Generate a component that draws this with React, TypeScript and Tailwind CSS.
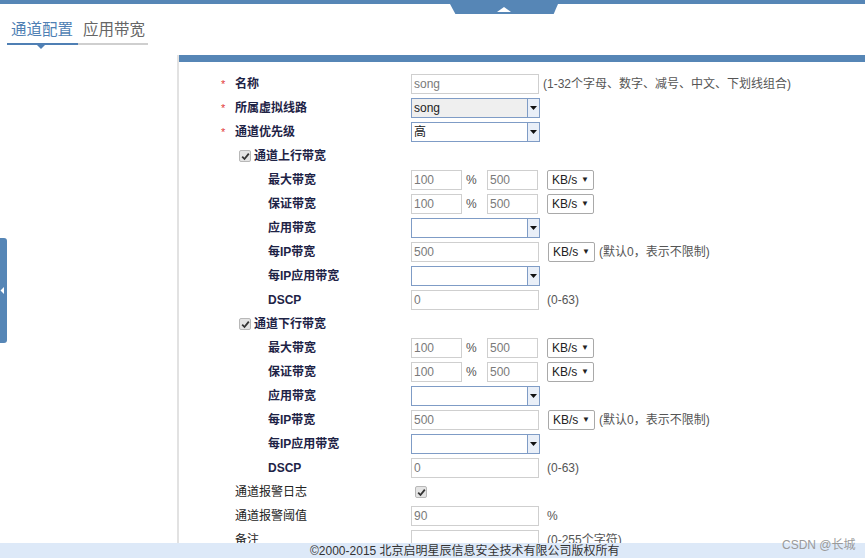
import type { ReactNode } from "react";

const FONT = '"Liberation Sans", "Noto Sans CJK SC", sans-serif';

type Indent = "star" | "plain" | "check" | "sub";

const INDENT_CLASSES: Record<Indent, string> = {
  star: "pl-[42px]",
  plain: "pl-[56px]",
  check: "pl-[60px]",
  sub: "pl-[89px]",
};

function CheckMark() {
  return (
    <span className="flex h-[12px] w-[12px] items-center justify-center rounded-[2px] border border-[#b8b8b8] bg-[#e4e4e4]">
      <svg width="9" height="9" viewBox="0 0 9 9">
        <path d="M1.2 4.6 L3.5 7 L7.8 1.6" fill="none" stroke="#333" strokeWidth="1.8" />
      </svg>
    </span>
  );
}

function Row({
  label,
  indent,
  bold = true,
  children,
}: {
  label: string;
  indent: Indent;
  bold?: boolean;
  children?: ReactNode;
}) {
  return (
    <div className="flex h-6 items-center">
      <div className={`flex w-[232px] shrink-0 items-center ${INDENT_CLASSES[indent]}`}>
        {indent === "star" && <span className="w-[14px] text-[11px] leading-none text-[#e23b3b]">*</span>}
        {indent === "check" && (
          <span className="mr-[3px]">
            <CheckMark />
          </span>
        )}
        <span className={`text-[12px] text-[#1e2346] ${bold ? "font-bold" : "font-normal text-[#222]"}`}>{label}</span>
      </div>
      <div className="flex items-center">{children}</div>
    </div>
  );
}

function TextBox({ value, w = "w-[128px]" }: { value: string; w?: string }) {
  return (
    <div className={`flex h-[20px] ${w} items-center border border-[#cfcfcf] bg-white px-[2px] text-[12px] text-[#7a7a7a]`}>
      {value}
    </div>
  );
}

function SelectBox({ value = "", gray = false }: { value?: string; gray?: boolean }) {
  return (
    <div
      className={`flex h-[20px] w-[129px] items-stretch border border-[#7f9cc6] text-[12px] text-[#222] ${
        gray ? "bg-[#efefef]" : "bg-white"
      }`}
    >
      <span className="flex flex-1 items-center pl-[2px]">{value}</span>
      <span className="flex w-[12px] items-center justify-center border-l border-[#7f9cc6] bg-[#e9eff8]">
        <svg width="7" height="4" viewBox="0 0 7 4">
          <path d="M0 0 H7 L3.5 4 Z" fill="#111" />
        </svg>
      </span>
    </div>
  );
}

function UnitSelect() {
  return (
    <div className="ml-[9px] flex h-[20px] w-[47px] items-center justify-between rounded-[2px] border border-[#a9a9a9] bg-white px-[4px] text-[12px] text-[#222]">
      <span>KB/s</span>
      <span className="text-[8px]">▼</span>
    </div>
  );
}

function Hint({ text, ml = "ml-[4px]" }: { text: string; ml?: string }) {
  return <span className={`${ml} text-[12px] text-[#555]`}>{text}</span>;
}

function BandwidthBlock({ title }: { title: string }) {
  return (
    <>
      <Row label={title} indent="check" />
      {["最大带宽", "保证带宽"].map((l) => (
        <Row key={l} label={l} indent="sub">
          <TextBox value="100" w="w-[51px]" />
          <span className="w-[25px] pl-[4px] text-[12px] text-[#555]">%</span>
          <TextBox value="500" w="w-[51px]" />
          <UnitSelect />
        </Row>
      ))}
      <Row label="应用带宽" indent="sub">
        <SelectBox />
      </Row>
      <Row label="每IP带宽" indent="sub">
        <TextBox value="500" />
        <UnitSelect />
        <Hint text="(默认0，表示不限制)" />
      </Row>
      <Row label="每IP应用带宽" indent="sub">
        <SelectBox />
      </Row>
      <Row label="DSCP" indent="sub">
        <TextBox value="0" />
        <Hint text="(0-63)" ml="ml-[8px]" />
      </Row>
    </>
  );
}

export default function App() {
  return (
    <div className="relative flex h-[558px] w-[865px] flex-col overflow-hidden bg-white" style={{ fontFamily: FONT }}>
      {/* top bar + collapse toggle */}
      <div className="h-[4px] w-full shrink-0 bg-[#5686b6]" />
      <div
        className="absolute left-[450px] top-[4px] flex h-[10px] w-[108px] items-center justify-center bg-[#5686b6]"
        style={{ clipPath: "polygon(0 0, 100% 0, 96% 100%, 5% 100%)" }}
      >
        <svg width="14" height="5" viewBox="0 0 14 5">
          <path d="M0 5 L7 0 L14 5 Z" fill="#fff" />
        </svg>
      </div>

      {/* tabs */}
      <div className="flex shrink-0 pl-[7px] pt-[16px]">
        <div className="relative w-[71px] border-b-2 border-[#4f7fb4] pb-[3px] pl-[4px] text-[15.5px] leading-[20px] text-[#4f7fb4]">
          通道配置
          <span className="absolute -bottom-[6px] left-[30px] h-0 w-0 border-x-[4px] border-t-[4px] border-x-transparent border-t-[#4f7fb4]" />
        </div>
        <div className="w-[70px] border-b-2 border-[#cfcfcf] pb-[3px] pl-[5px] text-[15.5px] leading-[20px] text-[#666]">
          应用带宽
        </div>
      </div>

      {/* main panel */}
      <div className="ml-[177px] mt-[10px] flex min-h-0 flex-1 flex-col border-l-2 border-[#e2e2e2]">
        <div className="h-[7px] shrink-0 bg-[#5686b6]" />
        <div className="pt-[10px]">
          <Row label="名称" indent="star">
            <TextBox value="song" />
            <Hint text="(1-32个字母、数字、减号、中文、下划线组合)" />
          </Row>
          <Row label="所属虚拟线路" indent="star">
            <SelectBox value="song" gray />
          </Row>
          <Row label="通道优先级" indent="star">
            <SelectBox value="高" />
          </Row>
          <BandwidthBlock title="通道上行带宽" />
          <BandwidthBlock title="通道下行带宽" />
          <Row label="通道报警日志" indent="plain" bold={false}>
            <span className="ml-[4px]">
              <CheckMark />
            </span>
          </Row>
          <Row label="通道报警阈值" indent="plain" bold={false}>
            <TextBox value="90" />
            <Hint text="%" ml="ml-[8px]" />
          </Row>
          <Row label="备注" indent="plain" bold={false}>
            <TextBox value="" />
            <Hint text="(0-255个字符)" ml="ml-[8px]" />
          </Row>
        </div>
      </div>

      {/* footer */}
      <div className="h-[15px] shrink-0 overflow-hidden bg-[#dde9f8] pl-[310px] pt-[1px] text-[12px] leading-[15px] text-[#333]">
        ©2000-2015 北京启明星辰信息安全技术有限公司版权所有
      </div>

      {/* left collapse tab */}
      <div className="absolute left-0 top-[238px] flex h-[105px] w-[7px] items-center rounded-r-[3px] bg-[#5686b6]">
        <svg width="5" height="7" viewBox="0 0 5 7">
          <path d="M4 0 L0.5 3.5 L4 7 Z" fill="#fff" />
        </svg>
      </div>

      {/* watermark */}
      <div className="absolute left-[782px] top-[536px] text-[12px] text-[#9a9a9a]">CSDN @长城</div>
    </div>
  );
}
